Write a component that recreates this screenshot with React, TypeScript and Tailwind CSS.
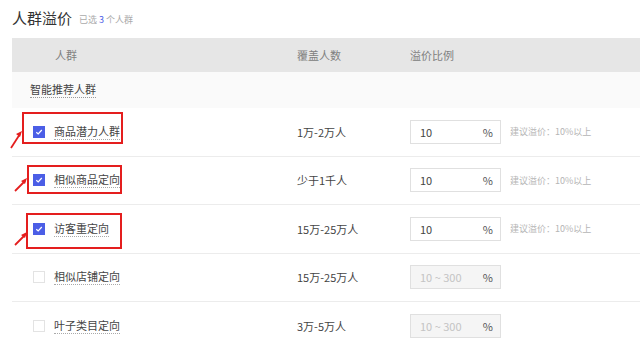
import React from 'react';

const ROWS = [
  { name: '商品潜力人群', count: '1万-2万人', checked: true },
  { name: '相似商品定向', count: '少于1千人', checked: true },
  { name: '访客重定向', count: '15万-25万人', checked: true },
  { name: '相似店铺定向', count: '15万-25万人', checked: false },
  { name: '叶子类目定向', count: '3万-5万人', checked: false },
];

// red annotation boxes + arrows drawn over the screenshot
const MARKS = [
  { box: 'left-[22px] top-[112px] w-[101px] h-[32px]', arrow: { x1: 11, y1: 148, x2: 22, y2: 131 } },
  { box: 'left-[27px] top-[165px] w-[95px] h-[29px]', arrow: { x1: 15, y1: 191, x2: 27, y2: 178 } },
  { box: 'left-[26px] top-[213px] w-[96px] h-[36px]', arrow: { x1: 15, y1: 245, x2: 27, y2: 232 } },
];

const Check: React.FC<{ on: boolean }> = ({ on }) =>
  on ? (
    <span className="w-[12px] h-[12px] shrink-0 bg-[#4b5ee6] flex items-center justify-center">
      <svg width="8" height="8" viewBox="0 0 8 8">
        <path d="M1.3 4.2 L3.2 6 L6.8 2" stroke="#fff" strokeWidth="1.2" fill="none" />
      </svg>
    </span>
  ) : (
    <span className="w-[12px] h-[12px] shrink-0 border border-[#e3e3e3] bg-white" />
  );

const App: React.FC = () => {
  return (
    <div className="relative w-[640px] h-[350px] bg-white overflow-hidden font-['Noto_Sans_CJK_SC',sans-serif] text-[#333]">
      <div className="flex items-end h-[38px] pl-[12px] pb-[10px]">
        <h1 className="text-[15px] leading-[20px] text-[#333]">人群溢价</h1>
        <span className="ml-[7px] text-[9px] leading-[14px] text-[#aaa] mb-[1px]">
          已选 <span className="text-[#4b5ee6]">3</span> 个人群
        </span>
      </div>

      <div className="ml-[12px]">
        <div className="grid grid-cols-[285px_113px_1fr] items-center h-[34px] bg-[#e6e6e6] text-[11px] text-[#808080]">
          <div className="pl-[43px]">人群</div>
          <div>覆盖人数</div>
          <div>溢价比例</div>
        </div>

        <div className="flex items-center h-[36px] bg-[#fafafa] pl-[18px] text-[11px] text-[#444]">
          <span className="border-b border-dotted border-[#999] leading-[15px]">智能推荐人群</span>
        </div>

        {ROWS.map(r => (
          <div key={r.name} className="grid grid-cols-[285px_113px_1fr] items-center h-[48.5px] border-b border-[#ececec] text-[11px]">
            <div className="pl-[21px] flex items-center gap-[9px]">
              <Check on={r.checked} />
              <span className="border-b border-dotted border-[#aaa] leading-[15px] text-[#444]">{r.name}</span>
            </div>
            <div className="text-[#444]">{r.count}</div>
            <div className="flex items-center">
              <div className={`w-[91px] h-[24px] border border-[#e0e0e0] flex items-center justify-between pl-[9px] pr-[7px] ${r.checked ? 'bg-white' : 'bg-[#f5f5f5]'}`}>
                <span className={r.checked ? 'text-[#444]' : 'text-[#c4c4c4]'}>{r.checked ? '10' : '10 ~ 300'}</span>
                <span className="text-[#555]">%</span>
              </div>
              {r.checked && <span className="ml-[9px] text-[9px] text-[#b5b5b5]">建议溢价：10%以上</span>}
            </div>
          </div>
        ))}
      </div>

      {MARKS.map((m, i) => (
        <div key={i} className={`absolute border-2 border-[#e41e1e] ${m.box}`} />
      ))}
      <svg className="absolute left-0 top-0" width="60" height="350">
        {MARKS.map((m, i) => (
          <g key={i}>
            <line x1={m.arrow.x1} y1={m.arrow.y1} x2={m.arrow.x2 - 2} y2={m.arrow.y2 + 3} stroke="#e41e1e" strokeWidth="1.8" />
            <path
              d={`M${m.arrow.x2} ${m.arrow.y2} L${m.arrow.x2 - 6} ${m.arrow.y2 + 3} L${m.arrow.x2 - 2} ${m.arrow.y2 + 6} Z`}
              fill="#e41e1e"
            />
          </g>
        ))}
      </svg>
    </div>
  );
};

export default App;
